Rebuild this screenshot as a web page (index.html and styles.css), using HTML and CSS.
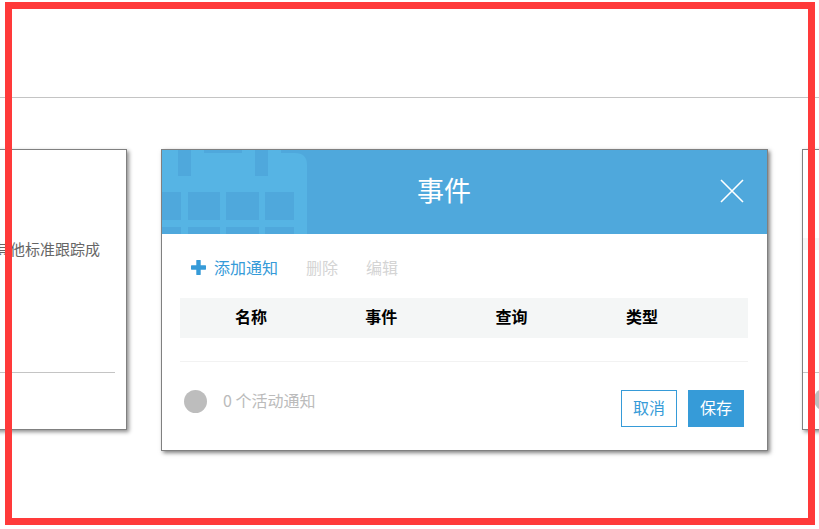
FILE: index.html
```html
<!DOCTYPE html>
<html lang="zh-CN">
<head>
  <meta charset="UTF-8">
  <title>事件</title>
  <link rel="stylesheet" href="styles.css">
</head>
<body>
  <div class="top-bar"></div>

  <div class="carousel">
    <div class="side-card left-card">
      <p class="side-text">其他标准跟踪成</p>
      <div class="side-line"></div>
    </div>

    <div class="modal">
      <div class="modal-head">
        <svg class="calendar" width="146" height="84" viewBox="0 0 146 84">
          <path fill="#56b4e4" d="M0 0H16V26H29V0H42V3H80V0H93V26H106V0H119V3H133Q145 3 145 15V84H0Z"/>
          <path fill="#4fa8dc" d="M0 42H19V70H0ZM26 42H58V70H26ZM64 42H97V70H64ZM103 42H132V70H103ZM0 77H19V84H0ZM26 77H58V84H26ZM64 77H97V84H64ZM103 77H132V84H103Z"/>
          <path fill="#4fa8dc" d="M16 0H29V23Q29 26 26 26H19Q16 26 16 23ZM93 0H106V23Q106 26 103 26H96Q93 26 93 23Z"/>
        </svg>
        <h2 class="modal-title">事件</h2>
        <svg class="close-icon" width="24" height="24" viewBox="0 0 24 24">
          <path d="M1 1L23 23M23 1L1 23" stroke="#fff" stroke-width="1.6" fill="none"/>
        </svg>
      </div>

      <div class="modal-body">
        <div class="toolbar">
          <span class="add-link">
            <svg class="plus-icon" width="15" height="15" viewBox="0 0 15 15">
              <path d="M7.5 1V14M1 7.5H14" stroke="#369bd8" stroke-width="4.4" fill="none" stroke-linecap="round"/>
            </svg>
            添加通知
          </span>
          <span class="tool-off">删除</span>
          <span class="tool-off">编辑</span>
        </div>

        <div class="table-head">
          <span>名称</span>
          <span>事件</span>
          <span>查询</span>
          <span>类型</span>
        </div>

        <div class="modal-foot">
          <div class="status">
            <span class="status-dot"></span>
            <span class="status-text">0 个活动通知</span>
          </div>
          <div class="buttons">
            <button class="btn-cancel">取消</button>
            <button class="btn-save">保存</button>
          </div>
        </div>
      </div>
    </div>

    <div class="side-card right-card">
      <div class="right-strip"></div>
      <div class="side-line"></div>
      <span class="right-dot"></span>
    </div>
  </div>

  <div class="red-frame"></div>
</body>
</html>
```

FILE: styles.css
```css
html, body {
  margin: 0;
  height: 100%;
  overflow: hidden;
  background: #fff;
}
body {
  font-family: "Noto Sans CJK SC", "Liberation Sans", sans-serif;
  font-size: 16px;
  position: relative;
}
.top-bar {
  height: 97px;
  border-bottom: 1px solid #c4c4c4;
}
.carousel {
  display: flex;
  align-items: flex-start;
  gap: 34px;
  margin-top: 51px;
  margin-left: -173px;
  width: 1400px;
}
.side-card {
  width: 300px;
  height: 281px;
  flex-shrink: 0;
  background: #fff;
  border: 1px solid #808080;
  box-shadow: 2px 2px 4px rgba(0, 0, 0, 0.45);
  box-sizing: border-box;
}
.left-card {
  padding-top: 88px;
}
.side-text {
  margin: 0;
  text-align: right;
  padding-right: 26px;
  font-size: 15px;
  line-height: 22px;
  color: #666;
}
.side-line {
  height: 1px;
  background: #c4c4c4;
  margin-top: 112px;
  margin-right: 11px;
}
.right-card {
  padding-top: 88px;
}
.right-strip {
  height: 12px;
  background: #f6f6f6;
}
.right-card .side-line {
  margin: 122px 0 0;
}
.right-dot {
  display: block;
  width: 23px;
  height: 23px;
  border-radius: 50%;
  background: #bdbdbd;
  margin: 15px 0 0 11px;
}
.modal {
  width: 607px;
  height: 302px;
  flex-shrink: 0;
  box-sizing: border-box;
  background: #fff;
  border: 1px solid #808080;
  box-shadow: 2px 2px 4px rgba(0, 0, 0, 0.5);
}
.modal-head {
  height: 84px;
  box-sizing: border-box;
  background: #4fa8dc;
  display: flex;
  align-items: center;
  justify-content: center;
  position: relative;
  padding: 0 41px 6px 0;
}
.calendar {
  position: absolute;
  left: 0;
  top: 0;
}
.modal-title {
  position: relative;
  margin: 0;
  font-size: 27px;
  font-weight: 400;
  color: #fff;
}
.close-icon {
  position: absolute;
  right: 23px;
  top: 29px;
}
.modal-body {
  padding: 0 19px 0 18px;
}
.toolbar {
  display: flex;
  align-items: center;
  box-sizing: border-box;
  height: 64px;
  padding: 2px 0 0 11px;
  gap: 28px;
}
.add-link {
  display: flex;
  align-items: center;
  gap: 8px;
  color: #369bd8;
}
.tool-off {
  color: #d4d4d4;
}
.table-head {
  display: grid;
  grid-template-columns: repeat(4, 130.3px);
  box-sizing: border-box;
  height: 40px;
  align-items: center;
  background: #f4f6f6;
  padding: 0 0 4px 55px;
  font-weight: 700;
  color: #000;
}
.modal-foot {
  margin-top: 23px;
  border-top: 1px solid #f2f2f2;
  display: flex;
  justify-content: space-between;
  padding: 28px 4px 0 4px;
}
.status {
  display: flex;
  align-items: center;
  gap: 16px;
  height: 23px;
}
.status-dot {
  width: 23px;
  height: 23px;
  border-radius: 50%;
  background: #bdbdbd;
}
.status-text {
  color: #bbb;
  padding-bottom: 4px;
}
.buttons {
  display: flex;
  gap: 11px;
}
.btn-cancel, .btn-save {
  width: 56px;
  height: 37px;
  box-sizing: border-box;
  padding: 0 0 4px;
  font-family: inherit;
  font-size: 16px;
  border: 1px solid #369bd8;
}
.btn-cancel {
  background: #fff;
  color: #369bd8;
}
.btn-save {
  background: #369bd8;
  color: #fff;
}
.red-frame {
  position: absolute;
  left: 5px;
  top: 2px;
  width: 810px;
  height: 523px;
  box-sizing: border-box;
  border: 7px solid #ff3a3a;
  pointer-events: none;
}
```
